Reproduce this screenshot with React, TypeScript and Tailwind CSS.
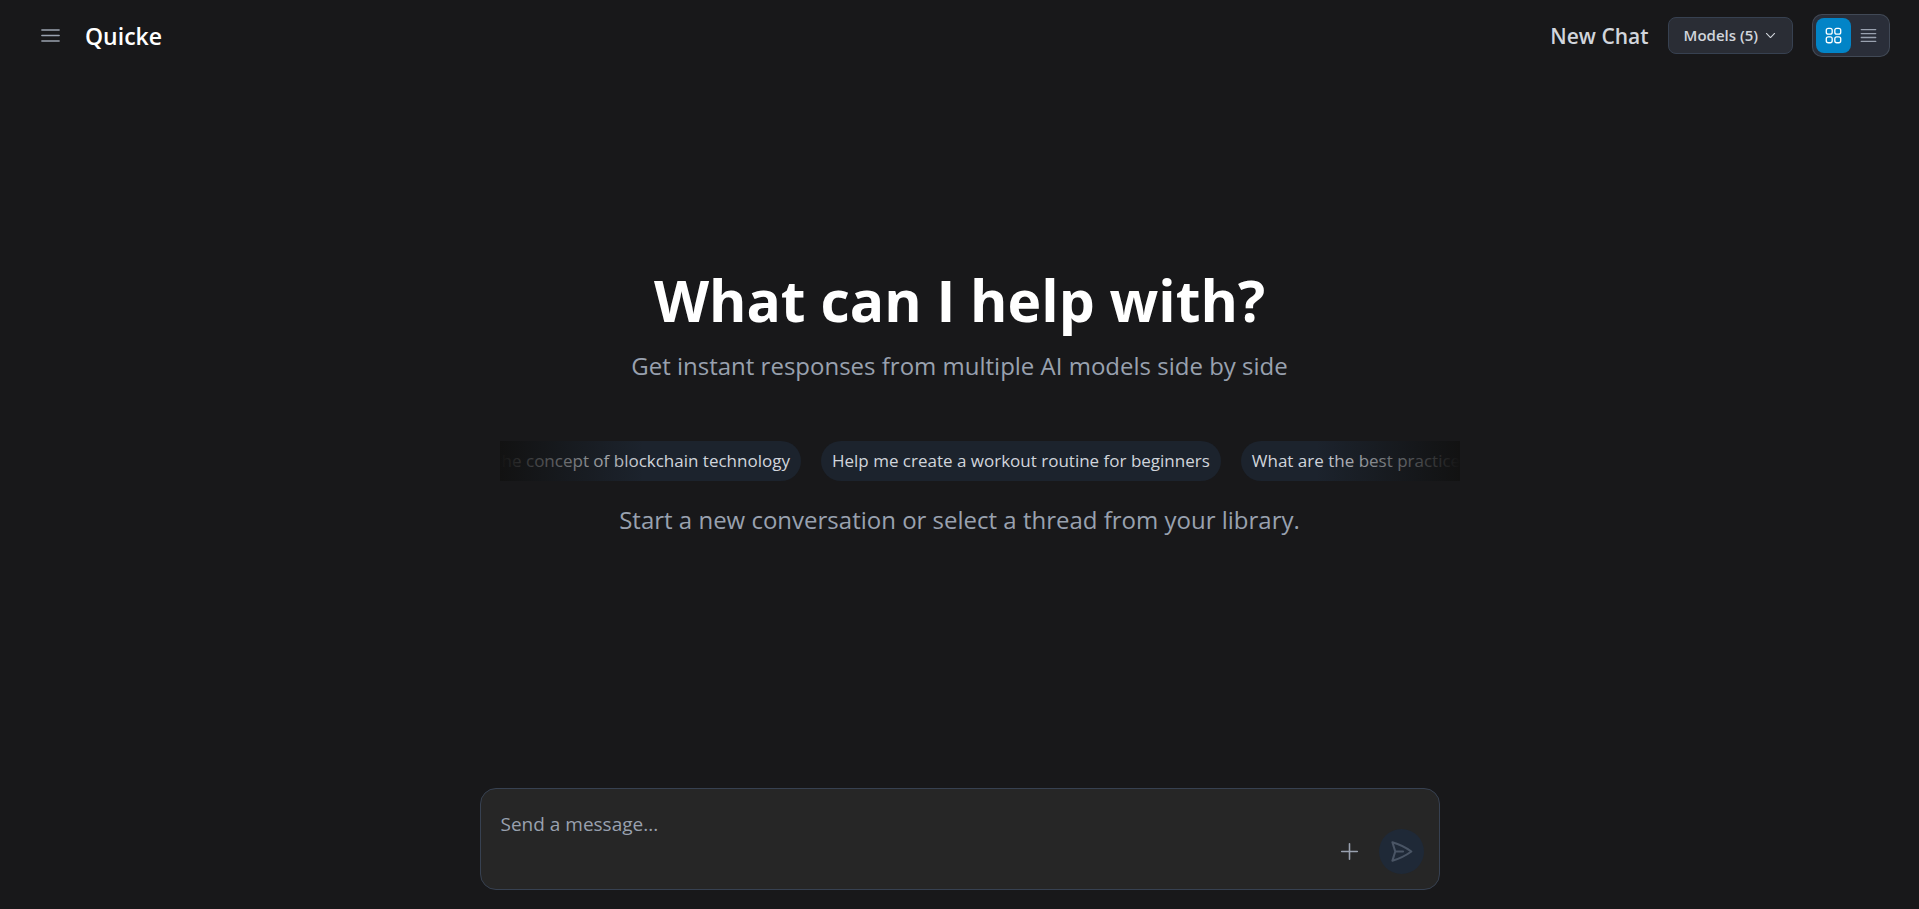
import { useState } from 'react';
import clsx from 'clsx';
import {
  HiOutlineBars3,
  HiOutlineBars4,
  HiOutlineChevronDown,
  HiOutlinePaperAirplane,
  HiOutlinePlus,
  HiOutlineSquares2X2,
} from 'react-icons/hi2';

type Layout = 'grid' | 'list';

const MODEL_COUNT = 5;

const suggestions = [
  'Explain the concept of blockchain technology',
  'Help me create a workout routine for beginners',
  'What are the best practices for remote work?',
];

function Header() {
  const [layout, setLayout] = useState<Layout>('grid');

  const layouts = [
    { id: 'grid' as const, label: 'Grid view', icon: HiOutlineSquares2X2 },
    { id: 'list' as const, label: 'List view', icon: HiOutlineBars4 },
  ];

  return (
    <header className="flex h-[71px] shrink-0 items-center justify-between pr-[29px] pl-[30px]">
      <div className="flex items-center gap-3.5">
        <button type="button" aria-label="Toggle sidebar" className="p-2 text-gray-400">
          <HiOutlineBars3 className="size-[25px]" />
        </button>
        <h1 className="pt-0.5 text-[23px] font-semibold text-white">Quicke</h1>
      </div>

      <div className="flex items-center gap-[19px]">
        <h2 className="pt-0.5 text-[21px] font-semibold text-gray-300">New Chat</h2>
        <button
          type="button"
          className="flex h-[37px] items-center gap-1.5 rounded-lg border border-[#374151] bg-[#2a2d35] px-[15px] text-[15px] font-semibold text-gray-300"
        >
          Models ({MODEL_COUNT})
          <HiOutlineChevronDown className="size-[13px]" strokeWidth={2} />
        </button>
        <div className="flex rounded-[10px] border border-[#4b5563]/70 bg-[#2a2e39] p-[3px]">
          {layouts.map(({ id, label, icon: Icon }) => (
            <button
              key={id}
              type="button"
              aria-label={label}
              aria-pressed={layout === id}
              onClick={() => setLayout(id)}
              className={clsx(
                'flex size-[35px] items-center justify-center rounded-lg',
                layout === id ? 'bg-[#0284c7] text-white' : 'text-gray-400',
              )}
            >
              <Icon className="size-[21px]" />
            </button>
          ))}
        </div>
      </div>
    </header>
  );
}

function Suggestions({ onPick }: { onPick: (text: string) => void }) {
  return (
    <div className="relative ml-5 w-full overflow-hidden">
      <div className="flex justify-center gap-5 pl-[84px]">
        {suggestions.map((text) => (
          <button
            key={text}
            type="button"
            onClick={() => onPick(text)}
            className="h-10 shrink-0 rounded-full bg-[#1c232d] px-[11px] text-[17px] whitespace-nowrap text-gray-300"
          >
            {text}
          </button>
        ))}
      </div>
      <div className="pointer-events-none absolute inset-y-0 left-0 w-36 bg-linear-to-r from-[#121212] to-transparent" />
      <div className="pointer-events-none absolute inset-y-0 right-0 w-36 bg-linear-to-l from-[#121212] to-transparent" />
    </div>
  );
}

export default function App() {
  const [message, setMessage] = useState('');

  return (
    <div className="flex min-h-screen flex-col bg-[#18181a] font-['Open_Sans','Noto_Sans',sans-serif]">
      <Header />

      <main className="flex flex-1 flex-col items-center justify-center pb-[50px] text-center">
        <div className="flex w-full max-w-[960px] flex-col items-center">
          <p className="text-[57px] leading-[60px] font-bold text-white">What can I help with?</p>
          <p className="mt-[18px] text-2xl leading-[35px] text-gray-400">
            Get instant responses from multiple AI models side by side
          </p>
          <div className="mt-[58px] w-full">
            <Suggestions onPick={setMessage} />
          </div>
          <p className="mt-5 text-2xl leading-[38px] text-gray-400">
            Start a new conversation or select a thread from your library.
          </p>
        </div>
      </main>

      <form
        onSubmit={(e) => e.preventDefault()}
        className="mx-auto mb-[19px] flex w-full max-w-[960px] items-end rounded-2xl border border-[#374151] bg-[#262626] pr-[15px] pl-5"
      >
        <textarea
          aria-label="Message"
          placeholder="Send a message..."
          value={message}
          onChange={(e) => setMessage(e.target.value)}
          className="h-[100px] flex-1 resize-none bg-transparent pt-5 text-[19px] leading-[30px] text-gray-200 outline-none placeholder:text-gray-400"
        />
        <div className="mb-[15px] flex items-center gap-[7px]">
          <button type="button" aria-label="Add attachment" className="p-[10px] text-gray-400">
            <HiOutlinePlus className="size-[25px]" />
          </button>
          <button
            type="submit"
            aria-label="Send message"
            disabled={!message.trim()}
            className="rounded-full bg-[#1f2937] p-[10px] text-gray-600"
          >
            <HiOutlinePaperAirplane className="size-[25px]" strokeWidth={2} />
          </button>
        </div>
      </form>
    </div>
  );
}
